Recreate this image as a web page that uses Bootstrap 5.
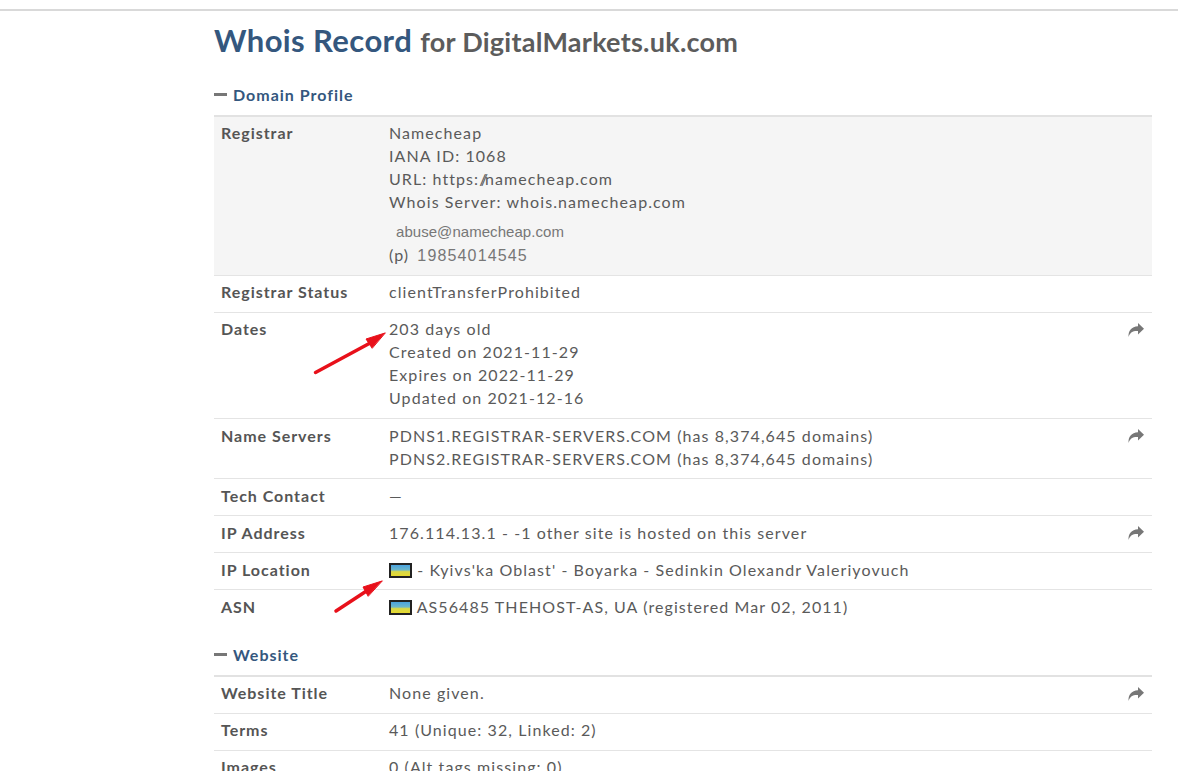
<!DOCTYPE html>
<html lang="en">
<head>
<meta charset="utf-8">
<title>Whois Record</title>
<link rel="stylesheet" href="https://cdn.jsdelivr.net/npm/bootstrap@5.3.0/dist/css/bootstrap.min.css">
<style>
html,body{height:771px;overflow:hidden}
body{font-family:Lato,"Liberation Sans",sans-serif;color:#555;background:#fff;position:relative}
.top-rule{height:11px;border-bottom:2px solid #d9d9d9}
.wrap{margin-left:214px;width:938px}
.title{font-size:32px;font-weight:700;color:#5c5c5c;margin:0;padding-top:8px;line-height:42px;letter-spacing:.35px;white-space:nowrap}
.title b{color:#34577e;font-size:31px;font-weight:700;letter-spacing:.4px}
.title span{font-size:27px;letter-spacing:.25px}
.sec-head{font-size:16px;font-weight:700;color:#34577e;letter-spacing:1px;line-height:20px;display:flex;align-items:center}
.sec-head i{display:block;width:13px;height:3px;background:#777;margin-right:6px;position:relative;top:-1px}
.sec-one{margin-top:22px;margin-bottom:10px}
.sec-two{margin-top:18px;margin-bottom:10px}
.rec{border-top:2px solid #e2e2e2;font-size:16px;letter-spacing:1.08px;line-height:23px}
.rec-row{display:flex;border-bottom:1px solid #e4e4e4;padding:4px 7px 9px;position:relative}
.rec-row.shade{background:#f5f5f5;padding-bottom:8px}
.rec-row.low{padding-top:5px;padding-bottom:8px}
.rec-row.flat{border-bottom-color:transparent}
.rec-k{width:168px;font-weight:700;flex:none;color:#555;letter-spacing:.97px}
.rec-v{flex:1;white-space:nowrap;color:#5a5a5a}
.blur-mail{display:block;font-family:"Liberation Sans",sans-serif;font-size:15px;letter-spacing:.05px;color:#777;padding-left:7px;line-height:23px;margin-top:7px}
.blur-num{font-family:"Liberation Sans",sans-serif;color:#777;letter-spacing:1.15px;margin-left:3px}
.tight{letter-spacing:-2px;margin-right:-1px}
.share{position:absolute;right:8px;top:10px;width:16px;height:14px;fill:#777}
.flag{display:inline-block;width:23px;height:15px;vertical-align:-2px;border:2px solid #222;background:linear-gradient(#4aa3df 0%,#6db7c9 45%,#d8d84a 60%,#e6d92e 100%)}
.overlay{position:absolute;left:0;top:0;pointer-events:none}
</style>
</head>
<body>
<div class="top-rule"></div>
<div class="wrap">
  <h1 class="title"><b>Whois Record</b> <span>for DigitalMarkets.uk.com</span></h1>

  <div class="sec-head sec-one"><i></i>Domain Profile</div>
  <div class="rec">
    <div class="rec-row shade">
      <div class="rec-k">Registrar</div>
      <div class="rec-v">Namecheap<br>IANA ID: 1068<br>URL: https:<span class="tight">//</span>namecheap.com<br>Whois Server: whois.namecheap.com
        <span class="blur-mail">abuse@namecheap.com</span>(p) <span class="blur-num">19854014545</span></div>
    </div>
    <div class="rec-row">
      <div class="rec-k">Registrar Status</div>
      <div class="rec-v">clientTransferProhibited</div>
    </div>
    <div class="rec-row">
      <div class="rec-k">Dates</div>
      <div class="rec-v">203 days old<br>Created on 2021-11-29<br>Expires on 2022-11-29<br>Updated on 2021-12-16</div>
      <svg class="share" viewBox="0 0 16 14"><path d="M10 0 16 5.700 10 11.500V8C5.500 7.600 2 9 .6 14 0 8 3.500 3.600 10 3.300z"/></svg>
    </div>
    <div class="rec-row low">
      <div class="rec-k">Name Servers</div>
      <div class="rec-v">PDNS1.REGISTRAR-SERVERS.COM (has 8,374,645 domains)<br>PDNS2.REGISTRAR-SERVERS.COM (has 8,374,645 domains)</div>
      <svg class="share" viewBox="0 0 16 14"><path d="M10 0 16 5.700 10 11.500V8C5.500 7.600 2 9 .6 14 0 8 3.500 3.600 10 3.300z"/></svg>
    </div>
    <div class="rec-row low">
      <div class="rec-k">Tech Contact</div>
      <div class="rec-v">—</div>
    </div>
    <div class="rec-row low">
      <div class="rec-k">IP Address</div>
      <div class="rec-v">176.114.13.1 - -1 other site is hosted on this server</div>
      <svg class="share" viewBox="0 0 16 14"><path d="M10 0 16 5.700 10 11.500V8C5.500 7.600 2 9 .6 14 0 8 3.500 3.600 10 3.300z"/></svg>
    </div>
    <div class="rec-row low">
      <div class="rec-k">IP Location</div>
      <div class="rec-v"><span class="flag"></span> - Kyivs'ka Oblast' - Boyarka - Sedinkin Olexandr Valeriyovuch</div>
    </div>
    <div class="rec-row low flat">
      <div class="rec-k">ASN</div>
      <div class="rec-v"><span class="flag"></span> AS56485 THEHOST-AS, UA (registered Mar 02, 2011)</div>
    </div>
  </div>

  <div class="sec-head sec-two"><i></i>Website</div>
  <div class="rec">
    <div class="rec-row">
      <div class="rec-k">Website Title</div>
      <div class="rec-v">None given.</div>
      <svg class="share" viewBox="0 0 16 14"><path d="M10 0 16 5.700 10 11.500V8C5.500 7.600 2 9 .6 14 0 8 3.500 3.600 10 3.300z"/></svg>
    </div>
    <div class="rec-row">
      <div class="rec-k">Terms</div>
      <div class="rec-v">41 (Unique: 32, Linked: 2)</div>
    </div>
    <div class="rec-row">
      <div class="rec-k">Images</div>
      <div class="rec-v">0 (Alt tags missing: 0)</div>
    </div>
  </div>
</div>

<svg class="overlay" width="1178" height="771" viewBox="0 0 1178 771">
  <g fill="#e8101a" stroke="#e8101a" stroke-linecap="round">
    <line x1="315.500" y1="372.500" x2="372" y2="342" stroke-width="3.500"/>
    <path d="M385 333 366 339 372 348z" stroke-width="1"/>
    <line x1="336" y1="611" x2="368" y2="590" stroke-width="3.500"/>
    <path d="M382 581 363 587 368 596z" stroke-width="1"/>
  </g>
</svg>
</body>
</html>
